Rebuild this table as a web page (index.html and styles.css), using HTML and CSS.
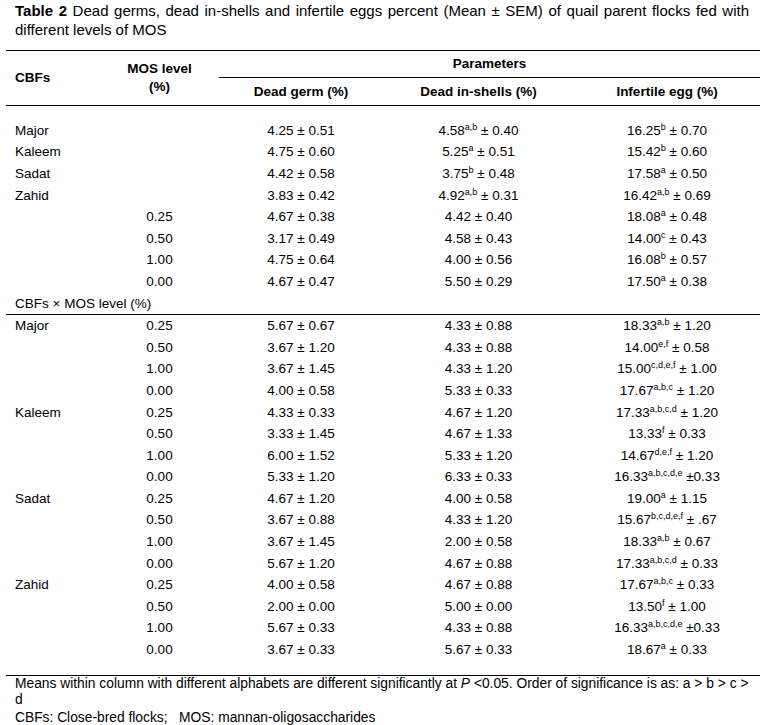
FILE: index.html
```html
<!DOCTYPE html>
<html>
<head>
<meta charset="utf-8">
<link rel="stylesheet" href="styles.css">
</head>
<body>
<div class="page">
  <p class="title"><b>Table 2</b> Dead germs, dead in-shells and infertile eggs percent (Mean ± SEM) of quail parent flocks fed with different levels of MOS</p>
  <table class="data">
    <colgroup>
      <col class="c1"><col class="c2"><col class="c3"><col class="c4"><col class="c5">
    </colgroup>
    <thead>
      <tr class="h1">
        <th rowspan="2" class="left">CBFs</th>
        <th rowspan="2">MOS level<br>(%)</th>
        <th colspan="3" class="params">Parameters</th>
      </tr>
      <tr class="h2">
        <th>Dead germ (%)</th>
        <th>Dead in-shells (%)</th>
        <th>Infertile egg (%)</th>
      </tr>
    </thead>
    <tbody>
      <tr class="first"><td class="left">Major</td><td></td><td>4.25 ± 0.51</td><td>4.58<sup>a,b</sup> ± 0.40</td><td>16.25<sup>b</sup> ± 0.70</td></tr>
      <tr><td class="left">Kaleem</td><td></td><td>4.75 ± 0.60</td><td>5.25<sup>a</sup> ± 0.51</td><td>15.42<sup>b</sup> ± 0.60</td></tr>
      <tr><td class="left">Sadat</td><td></td><td>4.42 ± 0.58</td><td>3.75<sup>b</sup> ± 0.48</td><td>17.58<sup>a</sup> ± 0.50</td></tr>
      <tr><td class="left">Zahid</td><td></td><td>3.83 ± 0.42</td><td>4.92<sup>a,b</sup> ± 0.31</td><td>16.42<sup>a,b</sup> ± 0.69</td></tr>
      <tr><td></td><td>0.25</td><td>4.67 ± 0.38</td><td>4.42 ± 0.40</td><td>18.08<sup>a</sup> ± 0.48</td></tr>
      <tr><td></td><td>0.50</td><td>3.17 ± 0.49</td><td>4.58 ± 0.43</td><td>14.00<sup>c</sup> ± 0.43</td></tr>
      <tr><td></td><td>1.00</td><td>4.75 ± 0.64</td><td>4.00 ± 0.56</td><td>16.08<sup>b</sup> ± 0.57</td></tr>
      <tr><td></td><td>0.00</td><td>4.67 ± 0.47</td><td>5.50 ± 0.29</td><td>17.50<sup>a</sup> ± 0.38</td></tr>
      <tr class="group"><td colspan="5" class="left">CBFs × MOS level (%)</td></tr>
      <tr><td class="left">Major</td><td>0.25</td><td>5.67 ± 0.67</td><td>4.33 ± 0.88</td><td>18.33<sup>a,b</sup> ± 1.20</td></tr>
      <tr><td></td><td>0.50</td><td>3.67 ± 1.20</td><td>4.33 ± 0.88</td><td>14.00<sup>e,f</sup> ± 0.58</td></tr>
      <tr><td></td><td>1.00</td><td>3.67 ± 1.45</td><td>4.33 ± 1.20</td><td>15.00<sup>c,d,e,f</sup> ± 1.00</td></tr>
      <tr><td></td><td>0.00</td><td>4.00 ± 0.58</td><td>5.33 ± 0.33</td><td>17.67<sup>a,b,c</sup> ± 1.20</td></tr>
      <tr><td class="left">Kaleem</td><td>0.25</td><td>4.33 ± 0.33</td><td>4.67 ± 1.20</td><td>17.33<sup>a,b,c,d</sup> ± 1.20</td></tr>
      <tr><td></td><td>0.50</td><td>3.33 ± 1.45</td><td>4.67 ± 1.33</td><td>13.33<sup>f</sup> ± 0.33</td></tr>
      <tr><td></td><td>1.00</td><td>6.00 ± 1.52</td><td>5.33 ± 1.20</td><td>14.67<sup>d,e,f</sup> ± 1.20</td></tr>
      <tr><td></td><td>0.00</td><td>5.33 ± 1.20</td><td>6.33 ± 0.33</td><td>16.33<sup>a,b,c,d,e</sup> ±0.33</td></tr>
      <tr><td class="left">Sadat</td><td>0.25</td><td>4.67 ± 1.20</td><td>4.00 ± 0.58</td><td>19.00<sup>a</sup> ± 1.15</td></tr>
      <tr><td></td><td>0.50</td><td>3.67 ± 0.88</td><td>4.33 ± 1.20</td><td>15.67<sup>b,c,d,e,f</sup> ± .67</td></tr>
      <tr><td></td><td>1.00</td><td>3.67 ± 1.45</td><td>2.00 ± 0.58</td><td>18.33<sup>a,b</sup> ± 0.67</td></tr>
      <tr><td></td><td>0.00</td><td>5.67 ± 1.20</td><td>4.67 ± 0.88</td><td>17.33<sup>a,b,c,d</sup> ± 0.33</td></tr>
      <tr><td class="left">Zahid</td><td>0.25</td><td>4.00 ± 0.58</td><td>4.67 ± 0.88</td><td>17.67<sup>a,b,c</sup> ± 0.33</td></tr>
      <tr><td></td><td>0.50</td><td>2.00 ± 0.00</td><td>5.00 ± 0.00</td><td>13.50<sup>f</sup> ± 1.00</td></tr>
      <tr><td></td><td>1.00</td><td>5.67 ± 0.33</td><td>4.33 ± 0.88</td><td>16.33<sup>a,b,c,d,e</sup> ±0.33</td></tr>
      <tr class="last"><td></td><td>0.00</td><td>3.67 ± 0.33</td><td>5.67 ± 0.33</td><td>18.67<sup>a</sup> ± 0.33</td></tr>
    </tbody>
  </table>
  <div class="notes">
    <p class="note1">Means within column with different alphabets are different significantly at <i>P</i> &lt;0.05. Order of significance is as: a &gt; b &gt; c &gt; d</p>
    <p class="note2">CBFs: Close-bred flocks;&nbsp;&nbsp; MOS: mannan-oligosaccharides</p>
  </div>
</div>
</body>
</html>
```
FILE: styles.css
```css
html, body {
  margin: 0;
  padding: 0;
  background: #fff;
}
.page {
  font-family: "Liberation Sans", Arial, sans-serif;
  color: #000;
  width: 762px;
}
.title {
  margin: 0;
  padding: 1px 13px 0 15px;
  font-size: 15px;
  line-height: 19px;
  height: 50px;
  box-sizing: border-box;
  text-align: justify;
}
.data {
  border-collapse: collapse;
  table-layout: fixed;
  width: 754px;
  margin-left: 6px;
  font-size: 13.5px;
}
.c1 { width: 94px; }
.c2 { width: 119px; }
.c3 { width: 164px; }
.c4 { width: 191px; }
.c5 { width: 186px; }
.data thead {
  border-top: 1px solid #000;
  border-bottom: 1px solid #000;
}
.data th {
  font-weight: bold;
  text-align: center;
  padding: 0;
  line-height: 18px;
}
.h1 th { height: 26px; }
.h2 th { height: 27px; }
.data th.params {
  border-bottom: 1px solid #000;
}
.data td {
  text-align: center;
  padding: 0;
  height: 21.6px;
  line-height: 16px;
  white-space: nowrap;
}
.data .left {
  text-align: left;
  padding-left: 9px;
}
.first td {
  padding-top: 14px;
}
.group td {
  border-bottom: 1px solid #000;
}
.last td {
  padding-bottom: 14px;
  border-bottom: 1px solid #000;
}
sup {
  font-size: 9px;
  line-height: 0;
  vertical-align: 5px;
}
.notes {
  padding-left: 15px;
  padding-right: 5px;
  font-size: 13.8px;
}
.notes p {
  margin: 0;
}
.note1 {
  line-height: 16px;
}
.note2 {
  line-height: 18px;
  margin-top: 1px !important;
}
```
